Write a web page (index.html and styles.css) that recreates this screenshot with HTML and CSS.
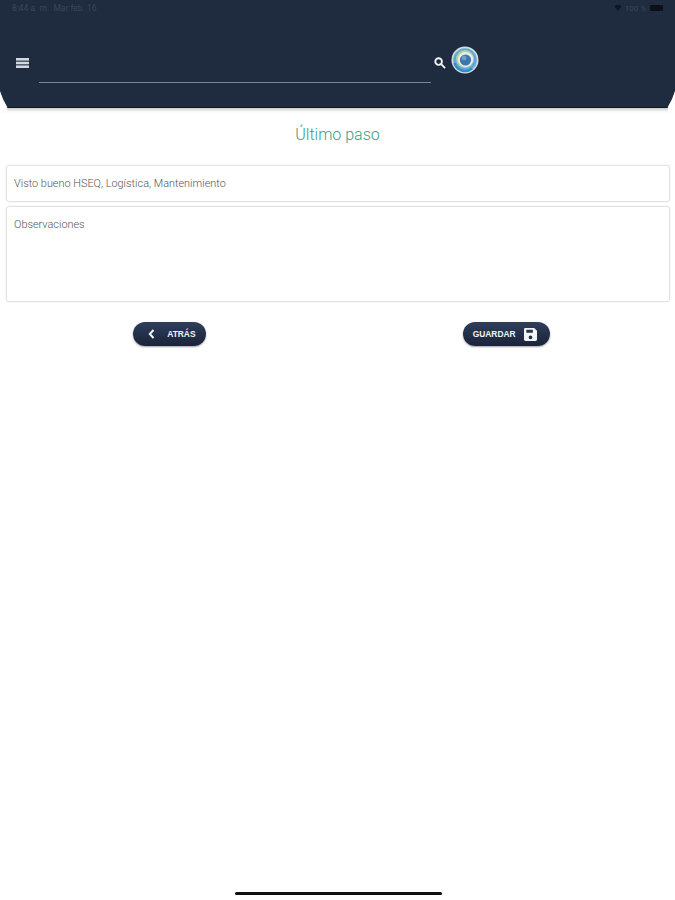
FILE: index.html
```html
<!DOCTYPE html>
<html>
    <head>
        <meta charset="UTF-8">
        <meta name="viewport" content="width=device-width, initial-scale=1.0">
        <title>Último paso</title>
        <link rel="stylesheet" href="styles.css">
    </head>

    <body>
        <div class="page">
            <header class="header">
                <div class="status">
                    <span>8:44 a. m.&nbsp;&nbsp;Mar feb. 16</span>
                    <span class="status-right">
                        <svg class="wifi" viewBox="0 0 10 8"><path d="M0 1.5C3 -.5 7 -.5 10 1.5L5 8z"/></svg>
                        <span>100 %</span>
                        <span class="battery"></span>
                    </span>
                </div>
                <div class="toolbar">
                    <svg class="menu" viewBox="0 0 13 10">
                        <rect y="0" width="13" height="2.6"/>
                        <rect y="3.7" width="13" height="2.6"/>
                        <rect y="7.4" width="13" height="2.6"/>
                    </svg>
                    <div class="search-line"></div>
                    <svg class="search" viewBox="0 0 13 13">
                        <circle cx="5" cy="5" r="3.6"/>
                        <path d="M7.8 7.8L12 12"/>
                    </svg>
                    <svg class="logo" viewBox="0 0 28 28">
                        <circle cx="14" cy="14" r="13.5" fill="#d5dde2"/>
                        <circle cx="14" cy="14" r="11.8" fill="#5fa8d8"/>
                        <path d="M3.5 17a11 11 0 0 0 17.5 5.5" fill="none" stroke="#2f8fc8" stroke-width="2.6"/>
                        <circle cx="14" cy="13" r="9" fill="#b9d28c"/>
                        <circle cx="14.5" cy="13.5" r="7.6" fill="#e6eef2"/>
                        <circle cx="14.5" cy="14" r="5.6" fill="#3f74ad"/>
                        <circle cx="13" cy="12" r="2.4" fill="#6f9fcc"/>
                    </svg>
                </div>
            </header>

            <h1 class="title">Último paso</h1>

            <div class="form">
                <div class="field">Visto bueno HSEQ, Logística, Mantenimiento</div>
                <div class="field field-big">Observaciones</div>
            </div>

            <div class="actions">
                <button class="btn btn-back">
                    <svg class="chevron" viewBox="0 0 7 10"><path d="M5.5 1L1.8 5l3.7 4"/></svg>
                    ATRÁS
                </button>
                <button class="btn btn-save">
                    GUARDAR
                    <svg class="save" viewBox="0 0 14 14">
                        <path fill-rule="evenodd" d="M1.5 0H11l3 3v9.5a1.5 1.5 0 0 1-1.5 1.5h-11A1.5 1.5 0 0 1 0 12.5v-11A1.5 1.5 0 0 1 1.5 0zM2.5 2v3h7V2zM7 8a2 2 0 1 0 0 4 2 2 0 0 0 0-4z"/>
                    </svg>
                </button>
            </div>

            <div class="home-bar"></div>
        </div>
    </body>
</html>
```

FILE: styles.css
```css
* {
    box-sizing: border-box;
}
body {
    margin: 0;
    font-family: Roboto, "Liberation Sans", sans-serif;
    background-color: #fff;
}
.page {
    display: flex;
    flex-direction: column;
    height: 900px;
    overflow: hidden;
}
.header {
    position: relative;
    height: 108px;
    padding: 3px 12px 0 12px;
    background-color: #1f2b3f;
    border-bottom: 1px solid #0c1238;
    box-shadow: 0 2px 3px #c8c8c8;
}
/* white cut corners at the bottom of the header */
.header::before,
.header::after {
    content: "";
    position: absolute;
    bottom: -5px;
    width: 8px;
    height: 21px;
    background-color: #fff;
}
.header::before {
    left: 0;
    clip-path: polygon(0 0, 40% 40%, 90% 76%, 90% 100%, 0 100%);
}
.header::after {
    right: 0;
    clip-path: polygon(100% 0, 60% 40%, 10% 76%, 10% 100%, 100% 100%);
}
.status {
    display: flex;
    justify-content: space-between;
    align-items: center;
    height: 10px;
    font-size: 8.5px;
    color: #3b475a;
}
.status-right {
    display: flex;
    align-items: center;
    gap: 3px;
    font-size: 8px;
}
.wifi {
    width: 8px;
    height: 6px;
    fill: #0f1726;
}
.battery {
    width: 13px;
    height: 6px;
    margin-left: 1px;
    background-color: #0b101b;
    border-radius: 1px;
}
.toolbar {
    display: flex;
    margin-top: 33px;
    height: 30px;
    padding-left: 4px;
}
.menu {
    width: 13px;
    height: 10px;
    margin-top: 12px;
    fill: #d3d8df;
}
.search-line {
    width: 392px;
    height: 1px;
    margin: 36px 0 0 10px;
    background-color: #7b8597;
}
.search {
    width: 12px;
    height: 12px;
    margin: 11px 0 0 3px;
    fill: none;
    stroke: #f2f4f6;
    stroke-width: 2;
}
.logo {
    width: 28px;
    height: 28px;
    margin: 0 0 0 5px;
}
.title {
    margin: 17px 0 0;
    font-size: 16px;
    font-weight: 300;
    line-height: 19px;
    text-align: center;
    color: #2f9f84;
}
.form {
    display: flex;
    flex-direction: column;
    gap: 4px;
    margin: 21px 5px 0 6px;
}
.field {
    height: 37px;
    padding: 11px 7px 0 7px;
    border: 1px solid #e2e2e2;
    border-radius: 3px;
    box-shadow: 0 0 2px #e8e8e8;
    font-size: 10.9px;
    font-weight: 300;
    line-height: 13px;
    color: #555;
}
.field-big {
    height: 96px;
}
.actions {
    display: grid;
    grid-template-columns: 1fr 1fr;
    justify-items: center;
    margin-top: 20px;
}
.btn {
    display: flex;
    align-items: center;
    height: 24px;
    border: none;
    border-radius: 12px;
    background: linear-gradient(#2f3e5c, #1a2338);
    box-shadow: 0 1px 2px #9aa0ab;
    font-family: "Liberation Sans", sans-serif;
    font-size: 8.4px;
    font-weight: 700;
    color: #f2f4f7;
}
.btn-back {
    width: 73px;
    margin-left: 2px;
    padding: 0 0 0 15px;
    gap: 12px;
}
.btn-save {
    width: 87px;
    padding: 0 0 0 10px;
    gap: 8px;
}
.chevron {
    width: 7px;
    height: 10px;
    fill: none;
    stroke: #f2f4f7;
    stroke-width: 2;
}
.save {
    width: 13px;
    height: 13px;
    fill: #f2f4f7;
}
.home-bar {
    width: 207px;
    height: 3px;
    margin: auto 0 5px 235px;
    background-color: #111;
    border-radius: 2px;
}
```
